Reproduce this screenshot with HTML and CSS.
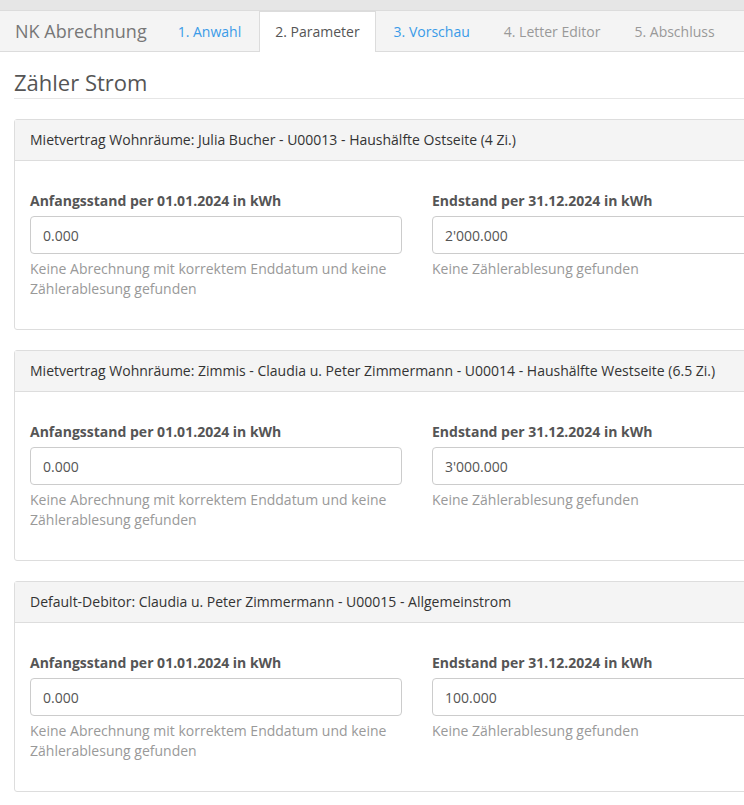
FILE: index.html
```html
<!DOCTYPE html>
<html lang="de">
<head>
  <meta charset="UTF-8">
  <meta name="viewport" content="width=device-width, initial-scale=1.0">
  <title>NK Abrechnung</title>
  <link rel="stylesheet" href="styles.css">
</head>
<body>
  <div class="topstrip"></div>

  <nav class="wizard">
    <div class="brand">NK Abrechnung</div>
    <div class="step done">1. Anwahl</div>
    <div class="step active">2. Parameter</div>
    <div class="step done">3. Vorschau</div>
    <div class="step">4. Letter Editor</div>
    <div class="step">5. Abschluss</div>
  </nav>

  <div class="page">
    <h2 class="section-title">Zähler Strom</h2>

    <div class="panel">
      <div class="panel-heading">Mietvertrag Wohnräume: Julia Bucher - U00013 - Haushälfte Ostseite (4 Zi.)</div>
      <div class="panel-body">
        <div class="field">
          <label>Anfangsstand per 01.01.2024 in kWh</label>
          <input type="text" value="0.000">
          <p class="help">Keine Abrechnung mit korrektem Enddatum und keine Zählerablesung gefunden</p>
        </div>
        <div class="field">
          <label>Endstand per 31.12.2024 in kWh</label>
          <input type="text" value="2'000.000">
          <p class="help">Keine Zählerablesung gefunden</p>
        </div>
      </div>
    </div>

    <div class="panel">
      <div class="panel-heading">Mietvertrag Wohnräume: Zimmis - Claudia u. Peter Zimmermann - U00014 - Haushälfte Westseite (6.5 Zi.)</div>
      <div class="panel-body">
        <div class="field">
          <label>Anfangsstand per 01.01.2024 in kWh</label>
          <input type="text" value="0.000">
          <p class="help">Keine Abrechnung mit korrektem Enddatum und keine Zählerablesung gefunden</p>
        </div>
        <div class="field">
          <label>Endstand per 31.12.2024 in kWh</label>
          <input type="text" value="3'000.000">
          <p class="help">Keine Zählerablesung gefunden</p>
        </div>
      </div>
    </div>

    <div class="panel">
      <div class="panel-heading">Default-Debitor: Claudia u. Peter Zimmermann - U00015 - Allgemeinstrom</div>
      <div class="panel-body">
        <div class="field">
          <label>Anfangsstand per 01.01.2024 in kWh</label>
          <input type="text" value="0.000">
          <p class="help">Keine Abrechnung mit korrektem Enddatum und keine Zählerablesung gefunden</p>
        </div>
        <div class="field">
          <label>Endstand per 31.12.2024 in kWh</label>
          <input type="text" value="100.000">
          <p class="help">Keine Zählerablesung gefunden</p>
        </div>
      </div>
    </div>
  </div>
</body>
</html>
```

FILE: styles.css
```css
html,
body {
  overflow: hidden;
}

body {
  font-family: "Open Sans", "Liberation Sans", sans-serif;
  font-size: 14px;
  line-height: 20px;
  color: #333;
  margin: 0;
  padding: 0;
  width: 1000px;
  background-color: #fff;
}

.topstrip {
  height: 10px;
  background-color: #e6e6e6;
}

.wizard {
  display: flex;
  align-items: stretch;
  height: 40px;
  background-color: #f4f4f4;
  border-top: 1px solid #dcdcdc;
  border-bottom: 1px solid #dcdcdc;
}

.brand {
  display: flex;
  align-items: center;
  padding: 0 15px 0 15px;
  font-size: 18px;
  color: #777;
}

.step {
  display: flex;
  align-items: center;
  padding: 0 15px;
  margin-right: 2px;
  border: 1px solid transparent;
  border-bottom: none;
  color: #999;
}

.step.done {
  color: #3a9be8;
}

.step.active {
  background-color: #fff;
  color: #555;
  border-color: #dcdcdc;
  margin-bottom: -1px;
}

.page {
  width: 806px;
  padding: 0 14px;
}

.section-title {
  margin: 18px 0 20px;
  padding-bottom: 4px;
  font-size: 22px;
  font-weight: 400;
  line-height: 24px;
  color: #555;
  border-bottom: 1px solid #e6e6e6;
}

.panel {
  border: 1px solid #ddd;
  border-radius: 3px;
  margin-bottom: 20px;
}

.panel-heading {
  padding: 10px 15px;
  background-color: #f4f4f4;
  border-bottom: 1px solid #ddd;
  color: #333;
  white-space: nowrap;
}

.panel-body {
  display: grid;
  grid-template-columns: 372px 372px;
  column-gap: 30px;
  padding: 30px 15px 15px;
}

.field {
  margin-bottom: 15px;
}

.field label {
  display: block;
  font-weight: 700;
  color: #555;
  margin-bottom: 5px;
}

.field input {
  display: block;
  box-sizing: border-box;
  width: 100%;
  height: 38px;
  padding: 8px 12px;
  font-family: inherit;
  font-size: 14px;
  color: #555;
  border: 1px solid #ccc;
  border-radius: 4px;
  background-color: #fff;
}

.help {
  margin: 5px 0 0;
  color: #999;
}
```
